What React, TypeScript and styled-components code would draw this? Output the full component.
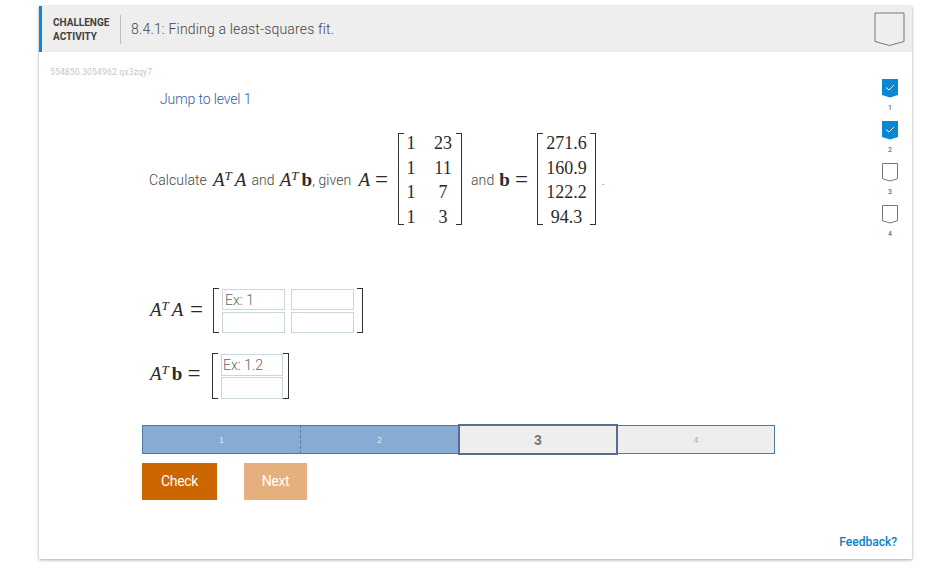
import React from "react";
import styled, { createGlobalStyle } from "styled-components";

const Global = createGlobalStyle`
  html, body { margin: 0; padding: 0; background: #fff; }
  body { font-family: Roboto, "Liberation Sans", sans-serif; }
`;

const Page = styled.div`
  width: 932px;
  height: 569px;
  padding: 6px 0 0 39px;
  box-sizing: border-box;
  overflow: hidden;
`;
const Card = styled.section`
  width: 873px;
  height: 553px;
  background: #fff;
  box-shadow: 0 1px 3px rgba(0, 0, 0, 0.35);
  display: flex;
  flex-direction: column;
`;
const Header = styled.header`
  height: 46px;
  flex: none;
  background: #eeeeee;
  border-left: 3px solid #0a87d2;
  box-sizing: border-box;
  display: flex;
  align-items: center;
  padding-left: 11px;
`;
const Kicker = styled.div`
  font-size: 10px;
  font-weight: 700;
  line-height: 14.5px;
  width: 68px;
  height: 29px;
  padding-top: 1px;
  box-sizing: border-box;
  color: #404040;
  border-right: 1px solid #bdbdbd;
  flex: none;
`;
const Title = styled.h1`
  margin: 0 0 0 10px;
  font-size: 14px;
  font-weight: 300;
  letter-spacing: 0.17px;
  color: #444;
  flex: 1;
`;
const BigBadge = styled.svg`
  width: 31px;
  height: 35px;
  margin-right: 7px;
  flex: none;
`;
const Body = styled.div`
  flex: 1;
  display: flex;
  min-height: 0;
`;
const Main = styled.main`
  flex: 1;
  min-width: 0;
  padding: 15px 0 0 11px;
`;
const Code = styled.div`
  font-size: 8.5px;
  line-height: 10px;
  letter-spacing: 0.18px;
  color: #c6c6c6;
`;
const Jump = styled.div`
  font-size: 14px;
  font-weight: 300;
  line-height: 16px;
  letter-spacing: -0.12px;
  color: #2f5da8;
  margin: 14px 0 0 110px;
`;
const Question = styled.div`
  margin: 25px 0 0 99px;
  display: flex;
  align-items: center;
  gap: 5px;
  font-size: 14px;
  font-weight: 300;
  letter-spacing: 0.1px;
  color: #444;
  height: 96px;
`;
const Spaced = styled.span<{ $left?: number; $right?: number }>`
  margin-left: ${(p) => p.$left ?? 0}px;
  margin-right: ${(p) => p.$right ?? 0}px;
`;
const M = styled.span`
  font-family: "Liberation Serif", serif;
  font-size: 19px;
  font-weight: 400;
  letter-spacing: 0;
  color: #2a2a2a;
  white-space: nowrap;
`;
const Var = styled.i`
  font-style: italic;
`;
const Sup = styled.sup`
  font-size: 13px;
  font-style: italic;
  line-height: 0;
  vertical-align: 6px;
  margin-right: 3px;
`;
const Bold = styled.b`
  font-weight: 700;
`;
const Eq = styled.span<{ $left?: number }>`
  margin-left: ${(p) => p.$left ?? 5}px;
  font-size: 23px;
  line-height: 0;
  vertical-align: -1px;
`;
const Bracket = styled.div<{ $gap?: number; $pad?: number }>`
  display: inline-flex;
  position: relative;
  align-self: center;
  padding: 0 ${(p) => p.$pad ?? 5}px;
  margin-left: ${(p) => p.$gap ?? 0}px;
  margin-bottom: 2px;
  &::before,
  &::after {
    content: "";
    position: absolute;
    top: 0;
    bottom: 0;
    width: 5px;
    border: 1.5px solid #333;
  }
  &::before { left: 0; border-right: none; }
  &::after { right: 0; border-left: none; }
`;
const Matrix = styled.div<{ $cols: string }>`
  display: grid;
  grid-template-columns: ${(p) => p.$cols};
  grid-auto-rows: 24.6px;
  align-items: center;
  justify-items: center;
  font-family: "Liberation Serif", serif;
  font-size: 18px;
  letter-spacing: 0;
  color: #2a2a2a;
  height: 92px;
  box-sizing: border-box;
  padding-top: 3px;
  align-content: center;
`;
const Period = styled.span`
  margin-left: 1px;
  align-self: flex-end;
  margin-bottom: 40px;
  font-size: 11px;
`;
const AnswerRow = styled.div<{ $top: number }>`
  display: flex;
  align-items: center;
  margin: ${(p) => p.$top}px 0 0 100px;
`;
const AnswerLabel = styled(M)<{ $w: number; $lift?: number }>`
  width: ${(p) => p.$w}px;
  flex: none;
  margin-bottom: ${(p) => p.$lift ?? 0}px;
`;
const Inputs = styled.div<{ $cols: number; $w: number; $colGap: number; $rowGap: number; $right: number }>`
  display: grid;
  grid-template-columns: repeat(${(p) => p.$cols}, ${(p) => p.$w}px);
  column-gap: ${(p) => p.$colGap}px;
  row-gap: ${(p) => p.$rowGap}px;
  padding: 1px ${(p) => p.$right}px 0 4px;
`;
const Cell = styled.div<{ $h: number; $inset?: number }>`
  height: ${(p) => p.$h}px;
  box-sizing: border-box;
  border: 1px solid #c9d6dc;
  font-size: 14px;
  font-weight: 300;
  line-height: 20px;
  padding-left: ${(p) => p.$inset ?? 2}px;
  color: #666;
  white-space: nowrap;
`;
const Progress = styled.div`
  margin: 24px 0 0 92px;
  width: 633px;
  height: 29px;
  display: grid;
  grid-template-columns: 158px 159px 159px 157px;
`;
const Segment = styled.div<{ $state: "done" | "current" | "todo"; $first?: boolean }>`
  box-sizing: border-box;
  display: flex;
  align-items: center;
  justify-content: center;
  font-family: "Liberation Sans", sans-serif;
  border: 1px solid #4d7ba8;
  ${(p) =>
    p.$state === "done"
      ? `background:#87abd2;color:#dbe7f3;font-size:9px;${
          p.$first ? "border-right:none;" : "border-left-style:dashed;"
        }`
      : p.$state === "current"
      ? "background:#eeeeee;color:#777;font-size:14px;font-weight:700;border:2px solid #546d92;margin:-1px 0 -1px -1px;"
      : "background:#eeeeee;color:#aaa;font-size:9px;border-left:none;"}
`;
const Buttons = styled.div`
  margin: 9px 0 0 92px;
  display: flex;
  gap: 27px;
`;
const Button = styled.div<{ $w: number; $disabled?: boolean }>`
  width: ${(p) => p.$w}px;
  height: 37px;
  box-sizing: border-box;
  padding-bottom: 1px;
  display: flex;
  align-items: center;
  justify-content: center;
  font-size: 14px;
  font-weight: 400;
  letter-spacing: -0.3px;
  color: #fff;
  background: ${(p) => (p.$disabled ? "#e6b07e" : "#cc6600")};
`;
const Side = styled.aside`
  width: 30px;
  margin-right: 7px;
  padding-top: 27px;
  flex: none;
  display: flex;
  flex-direction: column;
  align-items: center;
`;
const Level = styled.div`
  height: 42px;
  display: flex;
  flex-direction: column;
  align-items: center;
`;
const LevelIcon = styled.svg`
  width: 16px;
  height: 19px;
  display: block;
`;
const LevelNum = styled.span`
  margin-top: 6px;
  font-size: 7px;
  line-height: 8px;
  color: #444;
`;
const Footer = styled.footer`
  flex: none;
  height: 35px;
  box-sizing: border-box;
  padding: 11px 15px 0 0;
  text-align: right;
  font-size: 12px;
  font-weight: 500;
  color: #0a7fc9;
`;

function Chevron({ done }: { done: boolean }) {
  return (
    <LevelIcon viewBox="0 0 16 19">
      {done ? (
        <>
          <path d="M0 0H16V16L8 18.5L0 16Z" fill="#0a87d2" />
          <path d="M4 8.5L7 11L12 6" fill="none" stroke="#fff" strokeWidth="1" />
        </>
      ) : (
        <path d="M.5.5H15.5V15.7L8 18L.5 15.7Z" fill="#fff" stroke="#777" strokeWidth="1" />
      )}
    </LevelIcon>
  );
}

const AT = () => (
  <>
    <Var>A</Var>
    <Sup>T</Sup>
  </>
);

const m1 = ["1", "23", "1", "11", "1", "7", "1", "3"];
const m2 = ["271.6", "160.9", "122.2", "94.3"];

export default function App() {
  return (
    <Page>
      <Global />
      <Card>
        <Header>
          <Kicker>CHALLENGE<br />ACTIVITY</Kicker>
          <Title>8.4.1: Finding a least-squares fit.</Title>
          <BigBadge viewBox="0 0 31 35">
            <path d="M1 1H30V29.5L15.5 33.5L1 29.5Z" fill="#eee" stroke="#777" strokeWidth="1" />
          </BigBadge>
        </Header>
        <Body>
          <Main>
            <Code>554850.3054962.qx3zqy7</Code>
            <Jump>Jump to level 1</Jump>
            <Question>
              <Spaced $right={1}>Calculate</Spaced>
              <M><AT /><Var>A</Var></M>
              <span>and</span>
              <M><AT /><Bold>b</Bold></M>
              <Spaced $left={-5} $right={2}>, given</Spaced>
              <M><Var>A</Var><Eq>=</Eq></M>
              <Bracket $gap={5} $pad={0}>
                <Matrix $cols="26px 38px">
                  {m1.map((v, i) => <span key={i}>{v}</span>)}
                </Matrix>
              </Bracket>
              <Spaced $left={4}>and</Spaced>
              <M><Bold>b</Bold><Eq>=</Eq></M>
              <Bracket $gap={4} $pad={0}>
                <Matrix $cols="59px">
                  {m2.map((v, i) => <span key={i}>{v}</span>)}
                </Matrix>
              </Bracket>
              <Period>.</Period>
            </Question>
            <AnswerRow $top={60}>
              <AnswerLabel $w={63} $lift={4}><AT /><Var>A</Var><Eq $left={6.5}>=</Eq></AnswerLabel>
              <Bracket>
                <Inputs $cols={2} $w={63} $colGap={6} $rowGap={2} $right={4}>
                  <Cell $h={21}>Ex: 1</Cell>
                  <Cell $h={21} />
                  <Cell $h={21} />
                  <Cell $h={21} />
                </Inputs>
              </Bracket>
            </AnswerRow>
            <AnswerRow $top={18}>
              <AnswerLabel $w={62} $lift={6}><AT /><Bold>b</Bold><Eq>=</Eq></AnswerLabel>
              <Bracket>
                <Inputs $cols={1} $w={62} $colGap={0} $rowGap={1} $right={1}>
                  <Cell $h={22} $inset={1}>Ex: 1.2</Cell>
                  <Cell $h={22} />
                </Inputs>
              </Bracket>
            </AnswerRow>
            <Progress>
              <Segment $state="done" $first>1</Segment>
              <Segment $state="done">2</Segment>
              <Segment $state="current">3</Segment>
              <Segment $state="todo">4</Segment>
            </Progress>
            <Buttons>
              <Button $w={75}>Check</Button>
              <Button $w={63} $disabled>Next</Button>
            </Buttons>
          </Main>
          <Side>
            {[true, true, false, false].map((d, i) => (
              <Level key={i}>
                <Chevron done={d} />
                <LevelNum>{i + 1}</LevelNum>
              </Level>
            ))}
          </Side>
        </Body>
        <Footer>Feedback?</Footer>
      </Card>
    </Page>
  );
}
